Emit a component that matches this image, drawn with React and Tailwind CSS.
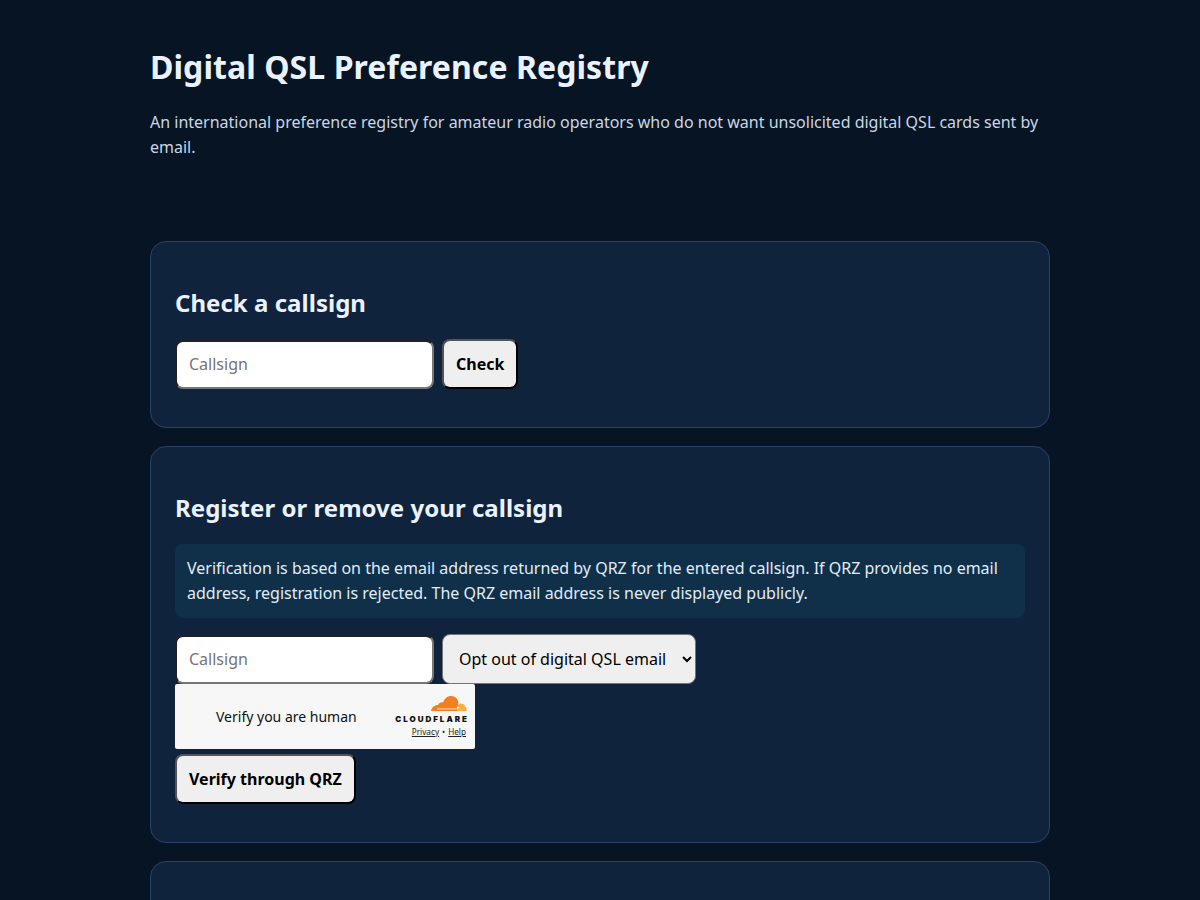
import React from 'react';

const font = 'font-["Noto_Sans",sans-serif]';
const inputCls = 'w-[259px] h-[49px] px-3 text-base text-black bg-white rounded-lg border-2 [border-style:inset] border-[#767676] placeholder:text-[#757575]';
const buttonCls = 'h-[50px] px-3 text-base font-bold text-black bg-[#efefef] rounded-lg border-2 [border-style:outset] border-black';

const CloudflareLogo = () => (
  <svg width="36" height="16" viewBox="0 0 36 16" className="block">
    <path d="M25 15 C26 11 27 7.500 30 7.500 C33 7.500 35.500 11 35.800 15 Z" fill="#fbad41" />
    <path d="M0 15 C0.500 11.500 3.500 9 7 9 C8 7 10 6 12 6.500 C13.500 2.500 16.500 0 20 0 C24.500 0 27.500 3.500 27.500 7.500 L26 15 Z" fill="#f38020" />
    <path d="M6 12.300 L26 12.300 L25.500 13.500 L6 13.500 Z" fill="#fbc48c" />
    <path d="M26 10 L28.500 11.800 L26 13.500 Z" fill="#ffffff" />
  </svg>
);

const TurnstileBox = () => (
  <div className="w-[300px] h-[65px] bg-[#f7f7f7] flex items-center justify-between pl-[41px] pr-[8px] rounded-[2px]">
    <span className="text-sm text-[#111]">Verify you are human</span>
    <div className="flex flex-col items-end">
      <CloudflareLogo />
      <div className="text-[8px] font-black tracking-[2px] leading-[10px] text-[#111] font-['Inter',sans-serif] mt-[2px] mr-[-2px]">CLOUDFLARE</div>
      <div className="text-[8.200px] leading-[12px] mt-[2px] text-[#222] flex gap-[3px] mr-[1px]">
        <span className="underline">Privacy</span><span>•</span><span className="underline">Help</span>
      </div>
    </div>
  </div>
);

export default function App() {
  return (
    <div className={`${font} h-[900px] overflow-hidden bg-[#061423]`}>
      <div className="w-[900px] mx-auto pt-6">
        {/* Header */}
        <header className="pt-[20px] pb-[81px]">
          <h1 className="text-[32px] leading-[46px] font-bold text-[#eaf2ff] tracking-[0.065px]">Digital QSL Preference Registry</h1>
          <p className="mt-[20px] text-base leading-[25px] text-[#cbd6e6]">
            An international preference registry for amateur radio operators who do not want unsolicited digital QSL cards sent by email.
          </p>
        </header>

        {/* Check card */}
        <section className="bg-[#0f233d] border border-[#2a4365] rounded-2xl p-6 pt-[44px] h-[187px]">
          <h2 className="text-2xl leading-[34px] font-bold text-[#eaf2ff] tracking-[0.03px]">Check a callsign</h2>
          <div className="flex gap-2 items-center mt-[19px]">
            <input placeholder="Callsign" className={inputCls} />
            <button className={buttonCls}>Check</button>
          </div>
        </section>

        {/* Register card */}
        <section className="mt-[18px] bg-[#0f233d] border border-[#2a4365] rounded-2xl p-6 pt-[44px] h-[397px]">
          <h2 className="text-2xl leading-[34px] font-bold text-[#eaf2ff] tracking-[0.03px]">Register or remove your callsign</h2>
          <div className="mt-[19px] bg-[#0f3048] rounded-lg px-3 py-[12px] text-base leading-[25px] text-[#e2ecf8]">
            Verification is based on the email address returned by QRZ for the entered callsign. If QRZ provides no email address, registration is rejected. The QRZ email address is never displayed publicly.
          </div>
          <div className="flex gap-2 items-center mt-4">
            <input placeholder="Callsign" className={inputCls} />
            <select className="w-[254px] h-[50px] pl-3 text-base text-black bg-[#efefef] rounded-lg border border-[#767676]">
              <option>Opt out of digital QSL email</option>
            </select>
          </div>
          <TurnstileBox />
          <button className={`${buttonCls} mt-[5px]`}>Verify through QRZ</button>
        </section>

        {/* Next card, cut off by the window */}
        <section className="mt-[18px] bg-[#0f233d] border border-[#2a4365] rounded-2xl h-[200px]" />
      </div>
    </div>
  );
}
